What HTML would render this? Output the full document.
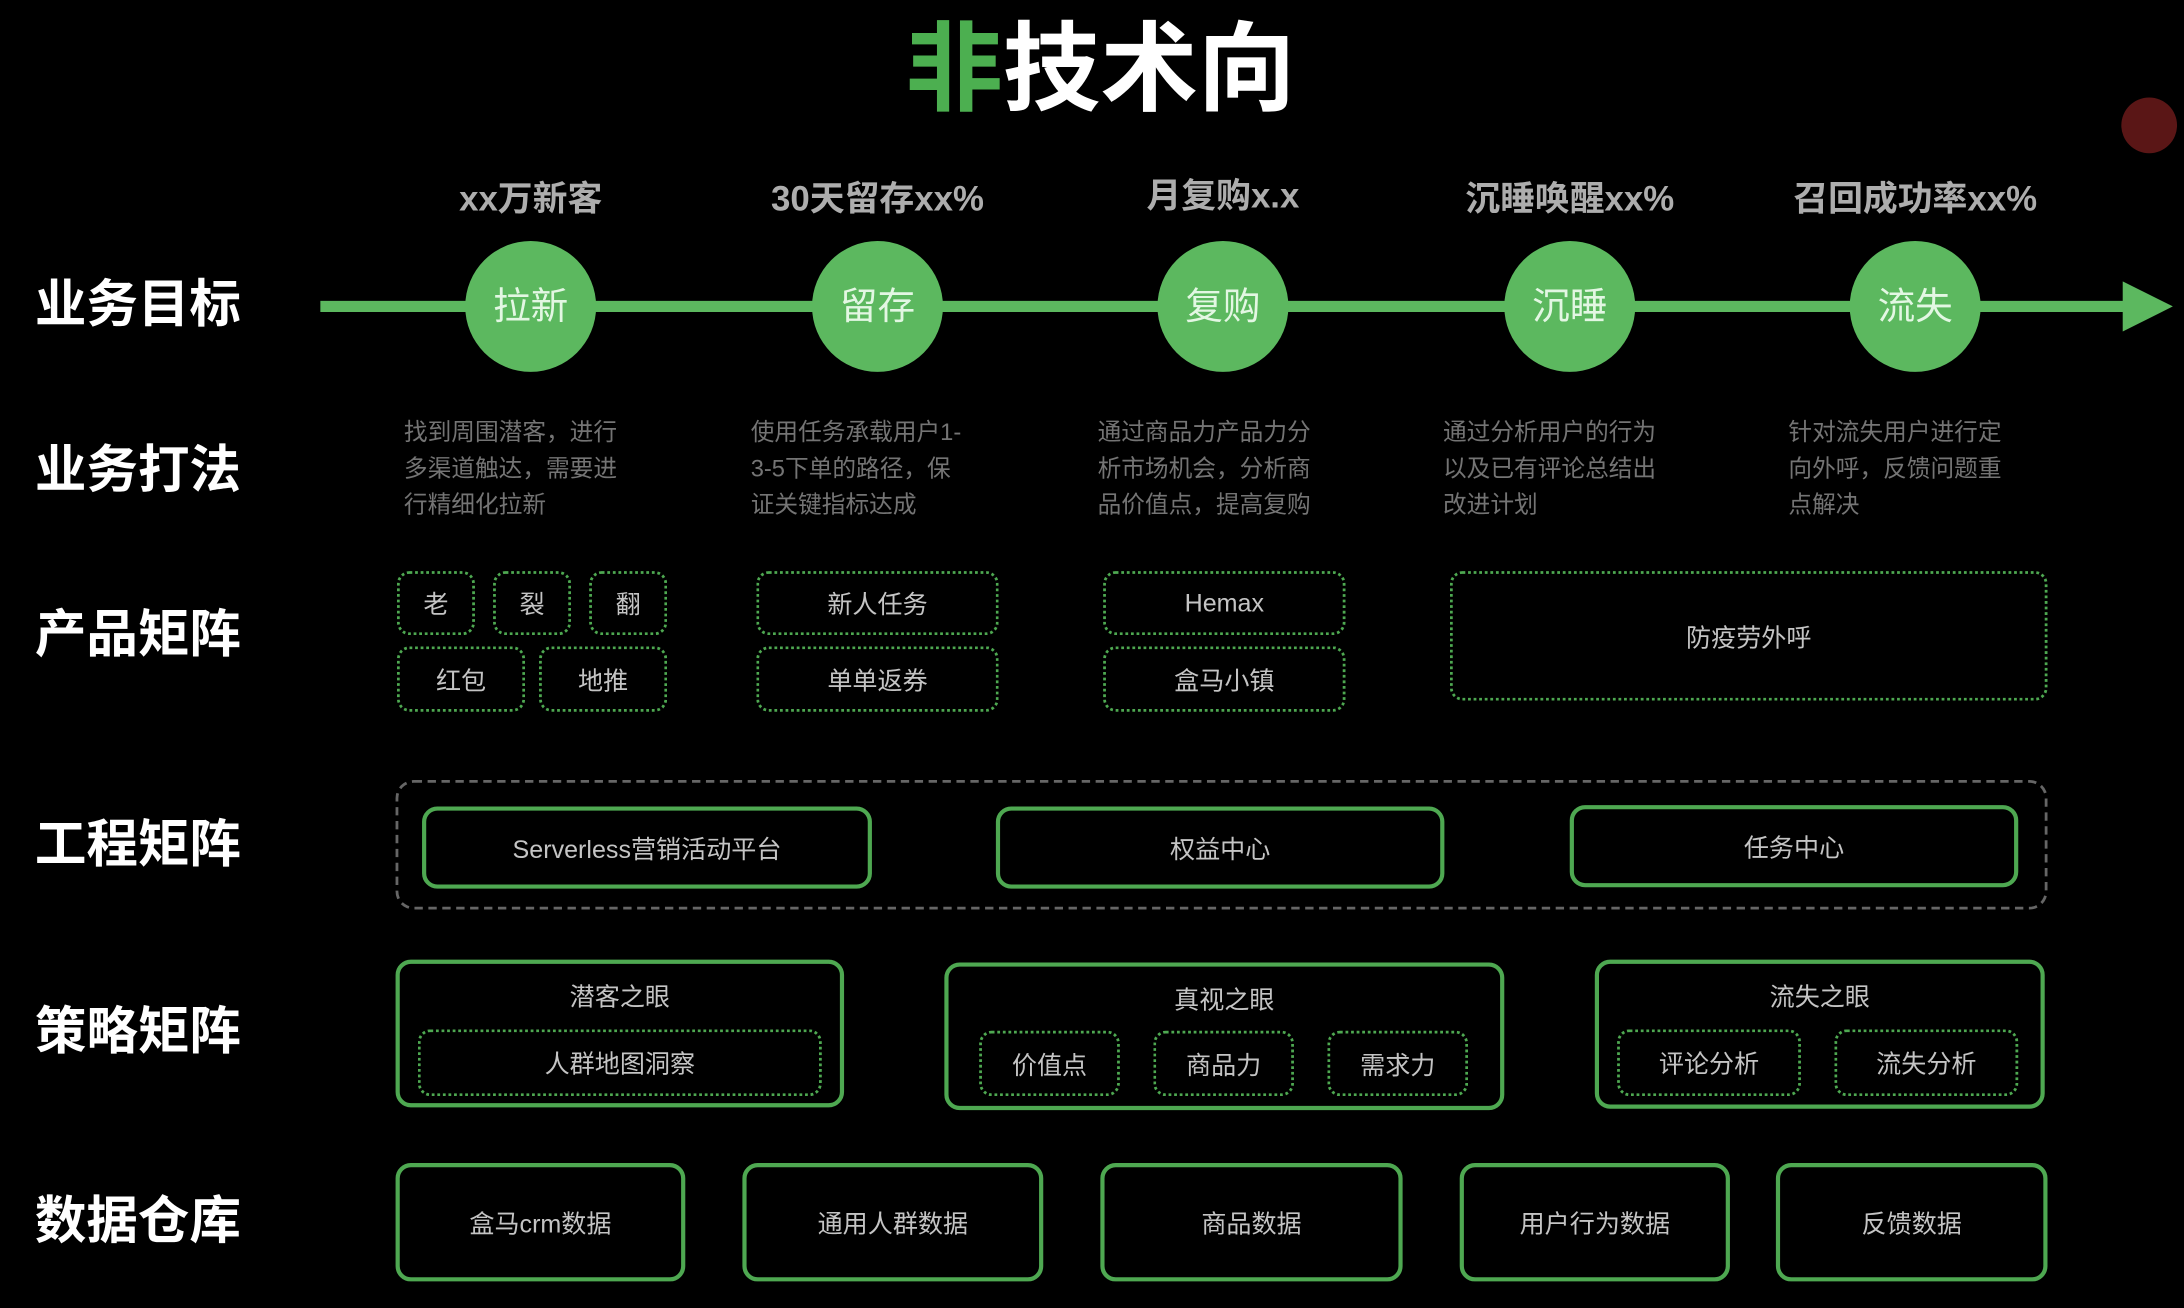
<!DOCTYPE html>
<html><head><meta charset="utf-8"><style>
html,body{margin:0;padding:0;background:#000;width:2184px;height:1308px;overflow:hidden}
#s{position:absolute;left:0;top:0;width:1568px;height:939px;transform:scale(1.39286);transform-origin:0 0;font-family:"Liberation Sans","Noto Sans CJK SC",sans-serif}
.a{position:absolute}
.lab{position:absolute;left:25px;font-size:37px;font-weight:bold;color:#fff;line-height:40px;margin-top:-20px}
.goal{position:absolute;font-size:25px;font-weight:bold;color:#adadad;width:240px;text-align:center;margin-left:-120px;top:126px;line-height:34px}
.c{position:absolute;top:173px;width:94px;height:94px;margin-left:-47px;border-radius:50%;background:#5cb85f;color:#e3f7e3;font-size:27px;line-height:94px;text-align:center}
.d{position:absolute;top:298px;font-size:17px;color:#747474;line-height:26px;width:180px}
.b{position:absolute;box-sizing:border-box;display:flex;align-items:center;justify-content:center;color:#c4c4c4;font-size:18px}
.dot{border:2px dotted #4ea851;border-radius:9px}
.sol{border:3px solid #4ea851;border-radius:11px}
.t{position:absolute;width:100%;text-align:center;top:10px;color:#c4c4c4;font-size:18px}
</style></head><body><div id="s">
<div class="a" style="left:0;width:1568px;top:8px;text-align:center;font-size:70px;font-weight:bold;color:#fff;line-height:84px;padding-left:12px;box-sizing:border-box"><span style="color:#4caf50">非</span>技术向</div>
<div class="a" style="left:1523px;top:70px;width:40px;height:40px;border-radius:50%;background:#5a1616"></div>

<div class="lab" style="top:219px">业务目标</div>
<div class="lab" style="top:338px">业务打法</div>
<div class="lab" style="top:456px">产品矩阵</div>
<div class="lab" style="top:607px">工程矩阵</div>
<div class="lab" style="top:741px">策略矩阵</div>
<div class="lab" style="top:877px">数据仓库</div>

<div class="a" style="left:230px;top:216px;width:1300px;height:8px;background:#5cb85f"></div>
<div class="a" style="left:1524px;top:202px;width:0;height:0;border-top:18px solid transparent;border-bottom:18px solid transparent;border-left:36px solid #5cb85f"></div>

<div class="goal" style="left:381px">xx万新客</div>
<div class="goal" style="left:630px">30天留存xx%</div>
<div class="goal" style="left:878px;top:124px">月复购x.x</div>
<div class="goal" style="left:1127px">沉睡唤醒xx%</div>
<div class="goal" style="left:1375px">召回成功率xx%</div>

<div class="c" style="left:381px">拉新</div>
<div class="c" style="left:630px">留存</div>
<div class="c" style="left:878px">复购</div>
<div class="c" style="left:1127px">沉睡</div>
<div class="c" style="left:1375px">流失</div>

<div class="d" style="left:290px">找到周围潜客，进行<br>多渠道触达，需要进<br>行精细化拉新</div>
<div class="d" style="left:539px">使用任务承载用户1-<br>3-5下单的路径，保<br>证关键指标达成</div>
<div class="d" style="left:788px">通过商品力产品力分<br>析市场机会，分析商<br>品价值点，提高复购</div>
<div class="d" style="left:1036px">通过分析用户的行为<br>以及已有评论总结出<br>改进计划</div>
<div class="d" style="left:1284px">针对流失用户进行定<br>向外呼，反馈问题重<br>点解决</div>

<div class="b dot" style="left:285px;top:410px;width:56px;height:46px">老</div>
<div class="b dot" style="left:354px;top:410px;width:56px;height:46px">裂</div>
<div class="b dot" style="left:423px;top:410px;width:56px;height:46px">翻</div>
<div class="b dot" style="left:285px;top:464px;width:92px;height:47px">红包</div>
<div class="b dot" style="left:387px;top:464px;width:92px;height:47px">地推</div>
<div class="b dot" style="left:543px;top:410px;width:174px;height:46px">新人任务</div>
<div class="b dot" style="left:543px;top:464px;width:174px;height:47px">单单返券</div>
<div class="b dot" style="left:792px;top:410px;width:174px;height:46px">Hemax</div>
<div class="b dot" style="left:792px;top:464px;width:174px;height:47px">盒马小镇</div>
<div class="b dot" style="left:1041px;top:410px;width:429px;height:93px">防疫劳外呼</div>

<div class="a" style="left:284px;top:560px;width:1186px;height:93px;box-sizing:border-box;border:2px dashed #666;border-radius:13px"></div>
<div class="b sol" style="left:303px;top:579px;width:323px;height:59px">Serverless营销活动平台</div>
<div class="b sol" style="left:715px;top:579px;width:322px;height:59px">权益中心</div>
<div class="b sol" style="left:1127px;top:578px;width:322px;height:59px">任务中心</div>

<div class="b sol" style="left:284px;top:689px;width:322px;height:106px"><div class="t">潜客之眼</div></div>
<div class="b dot" style="left:300px;top:739px;width:290px;height:48px">人群地图洞察</div>
<div class="b sol" style="left:678px;top:691px;width:402px;height:106px"><div class="t">真视之眼</div></div>
<div class="b dot" style="left:703px;top:740px;width:101px;height:47px">价值点</div>
<div class="b dot" style="left:828px;top:740px;width:101px;height:47px">商品力</div>
<div class="b dot" style="left:953px;top:740px;width:101px;height:47px">需求力</div>
<div class="b sol" style="left:1145px;top:689px;width:323px;height:107px"><div class="t">流失之眼</div></div>
<div class="b dot" style="left:1161px;top:739px;width:132px;height:48px">评论分析</div>
<div class="b dot" style="left:1317px;top:739px;width:132px;height:48px">流失分析</div>

<div class="b sol" style="left:284px;top:835px;width:208px;height:85px">盒马crm数据</div>
<div class="b sol" style="left:533px;top:835px;width:216px;height:85px">通用人群数据</div>
<div class="b sol" style="left:790px;top:835px;width:217px;height:85px">商品数据</div>
<div class="b sol" style="left:1048px;top:835px;width:194px;height:85px">用户行为数据</div>
<div class="b sol" style="left:1275px;top:835px;width:195px;height:85px">反馈数据</div>
</div></body></html>
